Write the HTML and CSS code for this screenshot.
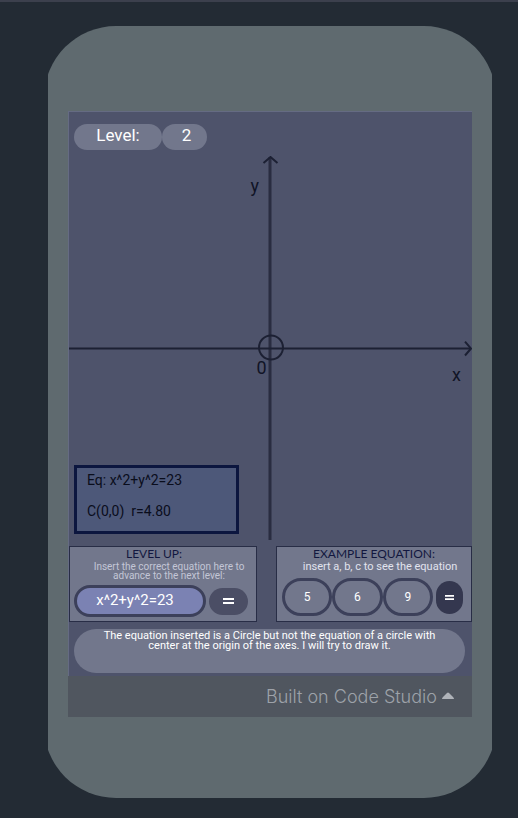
FILE: index.html
```html
<!DOCTYPE html>
<html lang="en">
<head>
<meta charset="utf-8">
<meta name="viewport" content="width=device-width, initial-scale=1">
<title>Circle equations</title>
<link rel="stylesheet" href="styles.css">
</head>
<body>
<main class="phone">
  <div class="screen">
    <div class="level">
      <span class="pill pill-label">Level:</span>
      <span class="pill pill-value">2</span>
    </div>
    <div class="plot">
      <svg class="axes" viewBox="0 0 404 385" role="img" aria-label="Circle at the origin of the x and y axes">
        <g fill="none" stroke="#1c2033">
          <path d="M201.500 1V385" stroke="#292c40" stroke-width="3"/>
          <path d="M195 7l7-6 7 6" stroke-width="2"/>
          <path d="M0 193H403" stroke-width="2"/>
          <path d="M397 186l6 7-6 7" stroke-width="2"/>
          <circle cx="202.500" cy="192" r="12" stroke-width="2"/>
        </g>
        <text x="182" y="36">y</text>
        <text x="188" y="219">0</text>
        <text x="384" y="226">x</text>
      </svg>
      <div class="result">
        <p>Eq: x^2+y^2=23</p>
        <p>C(0,0)&nbsp; r=4.80</p>
      </div>
    </div>
    <div class="panels">
      <form class="panel panel-level">
        <h2>LEVEL UP:</h2>
        <label class="hint" for="equation">Insert the correct equation here to advance to the next level:</label>
        <div class="controls">
          <input id="equation" class="field equation" type="text" value="x^2+y^2=23">
          <button class="equals" type="button" aria-label="Check equation"><svg viewBox="0 0 11 6"><path d="M0 1h11M0 5h11"/></svg></button>
        </div>
      </form>
      <form class="panel panel-example">
        <h2>EXAMPLE EQUATION:</h2>
        <p class="hint">insert a, b, c to see the equation</p>
        <div class="controls">
          <input class="field number" type="text" value="5" aria-label="a">
          <input class="field number" type="text" value="6" aria-label="b">
          <input class="field number" type="text" value="9" aria-label="c">
          <button class="equals dark" type="button" aria-label="Show equation"><svg viewBox="0 0 11 6"><path d="M0 1h11M0 5h11"/></svg></button>
        </div>
      </form>
    </div>
    <p class="message">The equation inserted is a Circle but not the equation of a circle with center at the origin of the axes. I will try to draw it.</p>
    <footer class="footer">
      <a href="#">Built on Code Studio <svg class="caret" viewBox="0 0 12 7"><path d="M0 7q0-1 1-2l4-4q1-1 2 0l4 4q1 1 1 2z"/></svg></a>
    </footer>
  </div>
</main>
</body>
</html>
```
FILE: styles.css
```css
* {
  box-sizing: border-box;
}

body {
  margin: 0;
  min-height: 100vh;
  padding: 24px 26px 20px 48px;
  border-top: 2px solid #3c404d;
  background: #232b34;
  font-family: Roboto, "Liberation Sans", sans-serif;
  color: #fff;
}

h2,
p {
  margin: 0;
}

/* The rounded body is wider than the phone, so its sides are cut flat. */
.phone {
  position: relative;
  z-index: 0;
  overflow: hidden;
  padding: 85px 20px 81px;
}

.phone::before {
  content: "";
  position: absolute;
  z-index: -1;
  inset: 0 -4px;
  border-radius: 72px;
  background: #5f6a6f;
}

.screen {
  border: 1px solid #656b83;
  border-width: 1px 0 0 1px;
  background: #4e536b;
}

.level {
  display: flex;
  padding: 12px 5px 6px;
}

.pill {
  height: 26px;
  border-radius: 13px;
  background: #72778c;
  font-size: 17px;
  line-height: 22px;
  text-align: center;
}

.pill-label {
  width: 88px;
}

.pill-value {
  width: 45px;
  padding-left: 4px;
}

.plot {
  position: relative;
}

.axes {
  display: block;
  width: 100%;
}

.axes text {
  fill: #111426;
  font-size: 18px;
}

.result {
  position: absolute;
  bottom: 6px;
  left: 5px;
  width: 165px;
  padding: 4px 10px 4px;
  border: 3px solid #0c163f;
  background: #4d5879;
  color: #0a0d1c;
  font-size: 14px;
  line-height: 16px;
}

.result p + p {
  margin-top: 15px;
}

.result p:last-child {
  padding-bottom: 8px;
}

.panels {
  display: grid;
  grid-template-columns: 188fr 196fr;
  gap: 19px;
  padding-top: 6px;
}

.panel {
  min-width: 0;
  height: 76px;
  border: 1px solid #282d46;
  background: #72778c;
  text-align: center;
}

h2 {
  color: #12173f;
  font-family: Lato, sans-serif;
  font-size: 12px;
  font-weight: 400;
  line-height: 14px;
}

.panel-level h2 {
  padding-right: 18px;
}

.hint {
  display: block;
  color: #c3c6d6;
  font-size: 10px;
  line-height: 9px;
}

.panel-level .hint {
  padding: 1px 8px 0 20px;
}

.panel-example .hint {
  padding-left: 12px;
  color: #e1e3ee;
  font-size: 11px;
  line-height: 12px;
}

.controls {
  display: flex;
  align-items: center;
}

.panel-level .controls {
  gap: 3px;
  padding: 5px 8px 0 4px;
}

.panel-example .controls {
  padding: 5px 8px 0 5px;
}

.field {
  flex: 1;
  min-width: 0;
  border: 3px solid #3c405a;
  background: #72778c;
  color: #fff;
  font-family: inherit;
  text-align: center;
}

.equation {
  height: 32px;
  padding: 0 10px 2px 0;
  border-radius: 16px;
  background: #7b82b3;
  font-size: 15px;
}

.number {
  height: 38px;
  padding: 0;
  border-radius: 19px;
  font-size: 12px;
}

.equals {
  display: grid;
  place-items: center;
  width: 39px;
  height: 27px;
  padding: 0;
  border: 0;
  border-radius: 14px;
  background: #4b4e65;
}

.equals svg {
  width: 11px;
  height: 6px;
  fill: none;
  stroke: #fff;
  stroke-width: 2;
}

.equals.dark {
  width: 27px;
  height: 33px;
  margin-left: 3px;
  background: #34374f;
}

.equals.dark svg {
  width: 9px;
  height: 5px;
}

.message {
  min-height: 44px;
  margin: 7px 7px 3px 5px;
  padding: 2px 24px;
  border-radius: 22px;
  background: #72778c;
  font-size: 11px;
  line-height: 10px;
  text-align: center;
}

.footer {
  height: 41px;
  margin-left: -1px;
  padding-right: 18px;
  background: #50565f;
  font-family: Inter, sans-serif;
  font-size: 18px;
  font-weight: 300;
  line-height: 42px;
  text-align: right;
}

.footer a {
  color: #9da2a9;
  text-decoration: none;
}

.caret {
  width: 12px;
  height: 7px;
  margin-bottom: 4px;
  fill: #afb3b9;
}
```
